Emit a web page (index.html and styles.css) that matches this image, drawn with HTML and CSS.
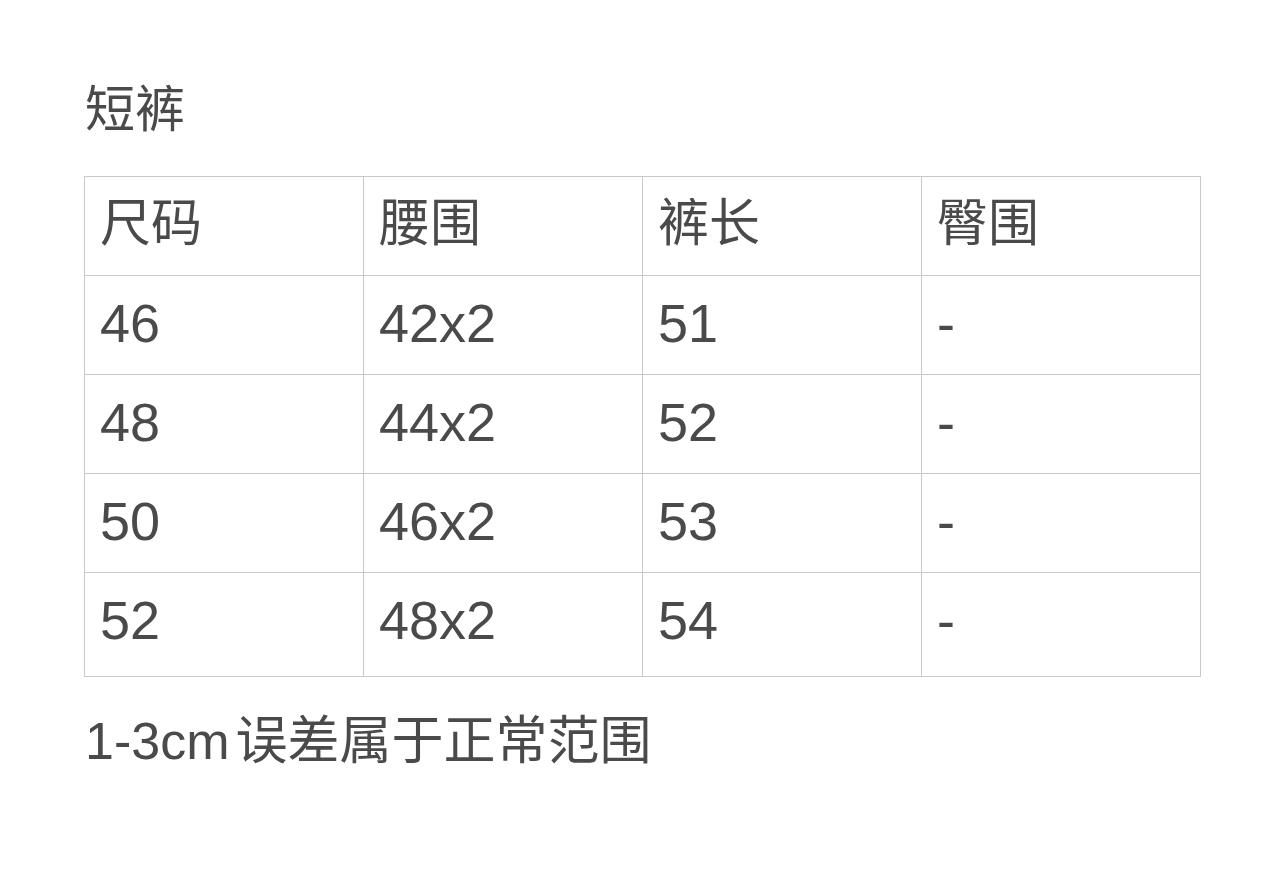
FILE: index.html
```html
<!DOCTYPE html>
<html lang="zh-CN">
<head>
<meta charset="utf-8">
<title>短裤</title>
<link rel="stylesheet" href="styles.css">
</head>
<body>
<main class="page">
  <h1 class="title">短裤</h1>
  <table class="size-table">
    <tr class="head"><td>尺码</td><td>腰围</td><td>裤长</td><td>臀围</td></tr>
    <tr><td>46</td><td>42x2</td><td>51</td><td>-</td></tr>
    <tr><td>48</td><td>44x2</td><td>52</td><td>-</td></tr>
    <tr><td>50</td><td>46x2</td><td>53</td><td>-</td></tr>
    <tr class="last"><td>52</td><td>48x2</td><td>54</td><td>-</td></tr>
  </table>
  <p class="note"><span class="latin">1-3cm</span><span class="cjk">误差属于正常范围</span></p>
</main>
</body>
</html>
```
FILE: styles.css
```css
html, body {
  margin: 0;
  padding: 0;
  background: #ffffff;
}
body {
  font-family: "Liberation Sans", "Noto Sans CJK SC", sans-serif;
  color: #4a4a4a;
}
.page {
  padding: 70px 84px 0 84px;
}
.title {
  margin: 0 0 0 1px;
  font-family: "Noto Sans CJK SC", sans-serif;
  font-size: 50px;
  font-weight: 400;
  line-height: 70px;
  height: 70px;
}
.size-table {
  margin-top: 36px;
  width: 1117px;
  border-collapse: collapse;
  table-layout: fixed;
}
.size-table td {
  border: 1px solid #c8c8c8;
  height: 99px;
  padding: 0 0 5px 15px;
  font-size: 54px;
  line-height: 60px;
  vertical-align: middle;
  box-sizing: border-box;
}
.size-table tr.head td {
  font-family: "Noto Sans CJK SC", sans-serif;
  font-size: 51px;
  padding-bottom: 14px;
}
.size-table tr.last td {
  height: 104px;
  padding-bottom: 10px;
}
.note {
  margin: 30px 0 0 1px;
  font-size: 52px;
  line-height: 60px;
}
.note .cjk {
  font-family: "Noto Sans CJK SC", sans-serif;
  font-size: 52px;
  margin-left: 6px;
}
```
